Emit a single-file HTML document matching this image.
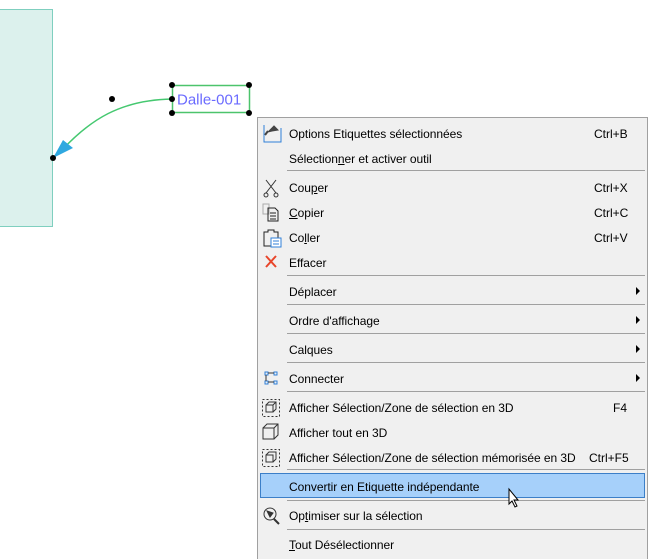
<!DOCTYPE html>
<html><head><style>
*{margin:0;padding:0;box-sizing:border-box}
body{width:648px;height:559px;background:#fff;position:relative;overflow:hidden;font-family:"Liberation Sans",sans-serif;font-size:12px;color:#000}
.menu{position:absolute;left:257px;top:117px;width:391px;height:442px;background:#f0f0f0;border:1px solid #a0a0a0;border-bottom:none}
.it{position:absolute;left:289px;height:16px;line-height:16px;white-space:nowrap;letter-spacing:-0.05px;margin-top:1px}
.sc{position:absolute;left:594px;height:16px;line-height:16px;margin-top:1px}
.sep{position:absolute;left:287px;width:358px;height:1px;background:#a0a0a0}
.arr{position:absolute;left:636px;width:0;height:0;border-top:4px solid transparent;border-bottom:4px solid transparent;border-left:4px solid #000}
u{text-decoration:underline}
</style></head><body>
<div style="position:absolute;left:0;top:9px;width:53px;height:218px;background:#dcf1ed;border:1px solid #7fcfbf;border-left:none"></div>
<svg width="648" height="559" style="position:absolute;left:0;top:0">
<path d="M172 99 C120 100 90 120 62 150" stroke="#45c870" stroke-width="1.5" fill="none"/>
<polygon points="53,158 63,140 73,148" fill="#2fa8e0"/>
<rect x="172.5" y="85.5" width="77" height="27" fill="#fff" stroke="#4cc46c" stroke-width="1.5"/>
<text x="177" y="104.5" font-family="Liberation Sans" font-size="15" fill="#6b6bff">Dalle-001</text>
<g fill="#000"><circle cx="172" cy="85" r="3"/><circle cx="249" cy="85" r="3"/><circle cx="172" cy="113" r="3"/><circle cx="249" cy="113" r="3"/><circle cx="172" cy="99" r="3"/><circle cx="112" cy="99" r="3"/><circle cx="53" cy="158" r="3"/></g>
</svg>
<div class="menu"></div>
<div style="position:absolute;left:260px;top:473px;width:385px;height:25px;background:#a6d0fa;border:1px solid #3c7fc8"></div>
<div class="it" style="top:125px">Options Etiquettes sélectionnées</div><div class="sc" style="top:125px">Ctrl+B</div>
<div class="it" style="top:150px">Sélection<u>n</u>er et activer outil</div>
<div class="sep" style="top:170px"></div>
<div class="it" style="top:179px">Cou<u>p</u>er</div><div class="sc" style="top:179px">Ctrl+X</div>
<div class="it" style="top:204px"><u>C</u>opier</div><div class="sc" style="top:204px">Ctrl+C</div>
<div class="it" style="top:229px">Co<u>l</u>ler</div><div class="sc" style="top:229px">Ctrl+V</div>
<div class="it" style="top:254px">Effacer</div>
<div class="sep" style="top:275px"></div>
<div class="it" style="top:283px">Déplacer</div><div class="arr" style="top:287px"></div>
<div class="sep" style="top:304px"></div>
<div class="it" style="top:312px">Ordre d'affichage</div><div class="arr" style="top:316px"></div>
<div class="sep" style="top:333px"></div>
<div class="it" style="top:341px">Calques</div><div class="arr" style="top:345px"></div>
<div class="sep" style="top:362px"></div>
<div class="it" style="top:370px">Connecter</div><div class="arr" style="top:374px"></div>
<div class="sep" style="top:391px"></div>
<div class="it" style="top:399px">Afficher Sélection/Zone de sélection en 3D</div><div class="sc" style="top:399px;left:613px">F4</div>
<div class="it" style="top:424px">Afficher tout en 3D</div>
<div class="it" style="top:449px">Afficher Sélection/Zone de sélection mémorisée en 3D</div><div class="sc" style="top:449px;left:589px">Ctrl+F5</div>
<div class="sep" style="top:469px"></div>
<div class="it" style="top:478px">Convertir en Etiquette indépendante</div>
<div class="sep" style="top:500px"></div>
<div class="it" style="top:507px">Op<u>t</u>imiser sur la sélection</div>
<div class="sep" style="top:529px"></div>
<div class="it" style="top:536px"><u>T</u>out Désélectionner</div>
<svg width="648" height="559" style="position:absolute;left:0;top:0" fill="none" stroke-width="1">
<path d="M264 125v17h17v-14" stroke="#2f7fd8"/><path d="M268 132l6-6 4 4-6 1z" fill="#444" stroke="#444"/><path d="M268 131l-3 4" stroke="#444" stroke-width="2"/>
<path d="M266 180l10 13M276 180l-10 13" stroke="#333"/><circle cx="266" cy="195" r="2" stroke="#333"/><circle cx="276" cy="195" r="2" stroke="#333"/>
<path d="M263 204h6v10h-6z" stroke="#aaa"/><path d="M268 208h7l3 3v10h-10z" stroke="#222"/><path d="M270 213h6M270 216h6M270 219h6" stroke="#222"/>
<path d="M264 232h4v-2h6v2h4v14h-14z" stroke="#222"/><path d="M271 238h10v9h-10z" fill="#fff" stroke="#2f7fd8"/><path d="M273 241h6M273 244h6" stroke="#2f7fd8"/>
<path d="M266 256l10 11M276 256l-10 11" stroke="#e8452a" stroke-width="2"/>
<rect x="265" y="372" width="3" height="3" stroke="#2f7fd8"/><rect x="274" y="372" width="3" height="3" stroke="#2f7fd8"/><rect x="265" y="381" width="3" height="3" stroke="#2f7fd8"/><rect x="274" y="381" width="3" height="3" stroke="#2f7fd8"/><path d="M268 373h6M266 375v6M268 382h6" stroke="#333"/>
<rect x="262.5" y="399.5" width="17" height="17" stroke="#333" stroke-dasharray="2,2"/><path d="M266 405h7v7h-7zM266 405l3-3h7v7l-3 3M273 405l3-3" stroke="#333"/>
<path d="M263 428h11v11h-11zM263 428l4-4h11v11l-4 4M274 428l4-4" stroke="#333"/>
<rect x="262.5" y="449.5" width="17" height="17" stroke="#333" stroke-dasharray="2,2"/><path d="M266 455h7v7h-7zM266 455l3-3h7v7l-3 3" stroke="#333"/>
<circle cx="270" cy="514" r="6" stroke="#333"/><path d="M274 519l5 5" stroke="#333" stroke-width="2"/><path d="M267 511l6 2-3 4z" fill="#333" stroke="#333"/>
<path d="M509 489v15l3-3 3 6 2-1-3-6h4z" fill="#fff" stroke="#000"/>
</svg>
</body></html>
